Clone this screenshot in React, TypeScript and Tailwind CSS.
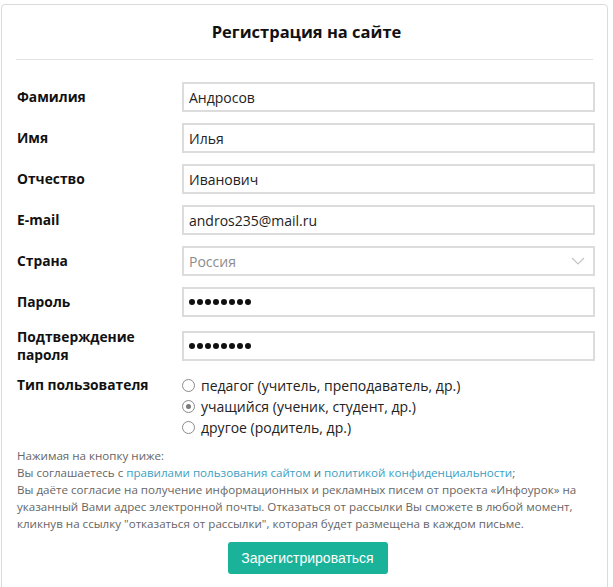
import React from "react";

const labelCls = "w-[165px] shrink-0 text-[13.8px] font-bold text-[#111] leading-[18px]";
const inputCls =
  "w-[413px] h-[30px] border-2 border-[#dcdcdc] bg-white flex items-center px-[5px] text-[14px] text-[#222]";

function Row({ label, children }: { label: React.ReactNode; children: React.ReactNode }) {
  return (
    <div className="flex items-center mb-[11px]">
      <div className={labelCls}>{label}</div>
      {children}
    </div>
  );
}

function Dots() {
  return (
    <div className="flex gap-[2px] items-center">
      {Array.from({ length: 8 }).map((_, i) => (
        <span key={i} className="w-[6px] h-[6px] rounded-full bg-[#111]" />
      ))}
    </div>
  );
}

function Radio({ checked, children }: { checked?: boolean; children: React.ReactNode }) {
  return (
    <div className="flex items-center h-[21px]">
      <span className="w-[13px] h-[13px] rounded-full border border-[#8a8a8a] bg-white flex items-center justify-center mr-[6px]">
        {checked && <span className="w-[5px] h-[5px] rounded-full bg-[#7a7a7a]" />}
      </span>
      <span className="text-[14px] text-[#222]">{children}</span>
    </div>
  );
}

export default function App() {
  return (
    <div className="w-[613px] h-[587px] bg-white overflow-hidden" style={{ fontFamily: '"Open Sans", sans-serif' }}>
      <div className="ml-[1px] mt-[4px] w-[607px] h-[600px] border border-[#dadada] rounded-[4px] bg-white">
        <div className="mx-[14px] h-[55px] border-b border-[#e3e3e3] flex items-center justify-center pl-[4px]">
          <h1 className="text-[16.5px] font-bold text-[#111]">Регистрация на сайте</h1>
        </div>
        <div className="pl-[15px] pt-[22px]">
          <Row label="Фамилия">
            <div className={inputCls}>Андросов</div>
          </Row>
          <Row label="Имя">
            <div className={inputCls}>Илья</div>
          </Row>
          <Row label="Отчество">
            <div className={inputCls}>Иванович</div>
          </Row>
          <Row label="E-mail">
            <div className={inputCls}>andros235@mail.ru</div>
          </Row>
          <Row label="Страна">
            <div className={inputCls + " justify-between !text-[#8c8c8c] pr-[8px]"}>
              <span>Россия</span>
              <svg width="14" height="8" viewBox="0 0 14 8" fill="none">
                <path d="M1 1l6 6 6-6" stroke="#c4c4c4" strokeWidth="1.2" />
              </svg>
            </div>
          </Row>
          <Row label="Пароль">
            <div className={inputCls}>
              <Dots />
            </div>
          </Row>
          <Row label={<>Подтверждение<br />пароля</>}>
            <div className={inputCls}>
              <Dots />
            </div>
          </Row>
          <div className="flex items-start mt-[11px]">
            <div className={labelCls + " pt-[1px]"}>Тип пользователя</div>
            <div className="flex flex-col">
              <Radio>педагог (учитель, преподаватель, др.)</Radio>
              <Radio checked>учащийся (ученик, студент, др.)</Radio>
              <Radio>другое (родитель, др.)</Radio>
            </div>
          </div>
          <div className="mt-[9px] pr-[14px] text-[11.6px] leading-[17px] text-[#666]">
            <p>Нажимая на кнопку ниже:</p>
            <p>
              Вы соглашаетесь с <span className="text-[#3a9fc4]">правилами пользования сайтом</span> и{" "}
              <span className="text-[#3a9fc4]">политикой конфиденциальности</span>;
            </p>
            <p>
              Вы даёте согласие на получение информационных и рекламных писем от проекта «Инфоурок» на указанный Вами
              адрес электронной почты. Отказаться от рассылки Вы сможете в любой момент, кликнув на ссылку "отказаться
              от рассылки", которая будет размещена в каждом письме.
            </p>
          </div>
        </div>
        <div className="flex justify-center mt-[10px] pl-[6px]">
          <button
            className="w-[160px] h-[32px] rounded-[3px] bg-[#1ab39a] text-white text-[14px]"
            style={{ fontFamily: '"Liberation Sans", Arial, sans-serif' }}
          >
            Зарегистрироваться
          </button>
        </div>
      </div>
    </div>
  );
}
